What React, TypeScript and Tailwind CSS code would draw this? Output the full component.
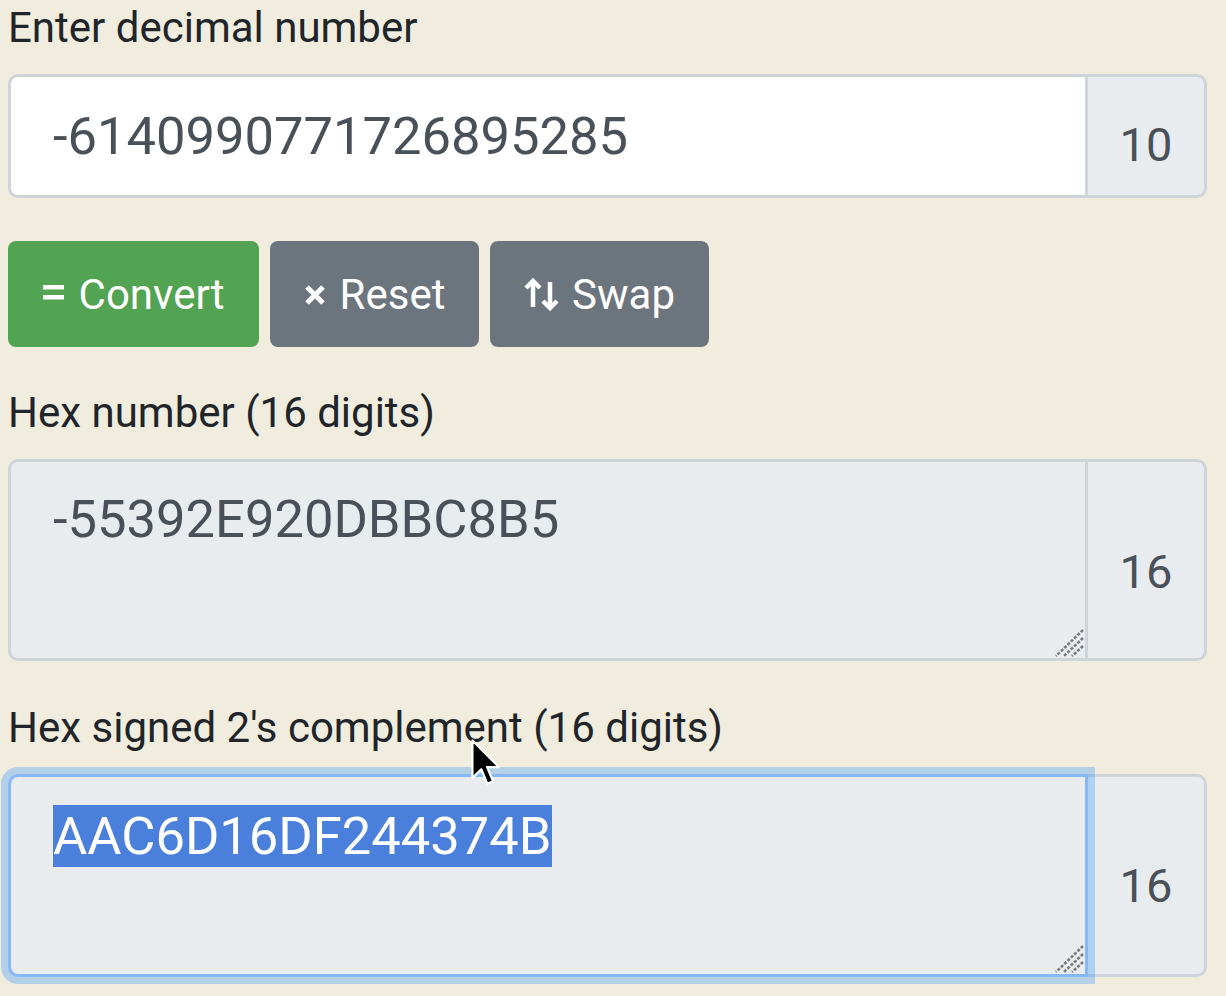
import React from "react";

const Grip = () => (
  <svg
    className="absolute right-[1px] bottom-[1px]"
    width="30"
    height="28"
    viewBox="0 0 30 28"
  >
    <g stroke="#7a7a7a" strokeWidth="2.6" strokeDasharray="3 1.6">
      <line x1="29" y1="1" x2="2" y2="27" />
      <line x1="29" y1="9" x2="10" y2="27" />
      <line x1="29" y1="17" x2="18" y2="27" />
    </g>
  </svg>
);

const Label = ({ children, mt }: { children: React.ReactNode; mt: string }) => (
  <div className={`${mt} mb-[21px] h-[50px] text-[42px] leading-[50px] text-[#212529] whitespace-nowrap`}>
    {children}
  </div>
);

export default function App() {
  return (
    <div className="relative min-h-screen w-full overflow-hidden bg-[#f0eddf] font-['Roboto','Liberation_Sans',sans-serif]">
      <div className="w-[1207px] pl-[8px]">
        <Label mt="mt-[3px]">Enter decimal number</Label>

        <div className="flex h-[124px] w-[1199px]">
          <div className="flex flex-1 items-center rounded-l-[10px] border-[3px] border-[#ced4da] bg-white pl-[42px] text-[52.5px] leading-[62px] text-[#495057]">
            -6140990771726895285
          </div>
          <div className="flex w-[119px] items-center justify-center rounded-r-[10px] border-[3px] border-l-0 border-[#ced4da] bg-[#e9ecef] pt-[18px] text-[47px] leading-[62px] text-[#495057]">
            10
          </div>
        </div>

        <div className="mt-[43px] flex h-[106px] gap-[11px]">
          <button className="flex w-[251px] items-center justify-center gap-[15px] rounded-[8px] bg-[#52a352] text-[42px] text-white">
            <svg width="21" height="15" viewBox="0 0 21 15" className="mb-[4px]">
              <rect x="0" y="0" width="21" height="4.5" fill="white" />
              <rect x="0" y="10" width="21" height="4.5" fill="white" />
            </svg>
            <span>Convert</span>
          </button>
          <button className="flex w-[209px] items-center justify-center gap-[14px] rounded-[8px] bg-[#6c757d] text-[42px] text-white">
            <svg width="22" height="22" viewBox="0 0 22 22" className="mt-[2px]">
              <path d="M3 3 L19 19 M19 3 L3 19" stroke="white" strokeWidth="5" />
            </svg>
            <span>Reset</span>
          </button>
          <button className="flex w-[219px] items-center justify-center gap-[12px] rounded-[8px] bg-[#6c757d] text-[42px] text-white">
            <svg width="36" height="35" viewBox="0 0 36 35">
              <g stroke="white" strokeWidth="4.5" fill="none">
                <line x1="9" y1="4" x2="9" y2="30" />
                <polyline points="2,11 9,4 16,11" />
                <line x1="26" y1="5" x2="26" y2="31" />
                <polyline points="19,24 26,31 33,24" />
              </g>
            </svg>
            <span>Swap</span>
          </button>
        </div>

        <Label mt="mt-[41px]">Hex number (16 digits)</Label>

        <div className="flex h-[202px] w-[1199px]">
          <div className="relative flex-1 rounded-l-[10px] border-[3px] border-[#ced4da] bg-[#e9ecef] pl-[42px] pt-[26px] text-[52.5px] leading-[62px] text-[#495057]">
            -55392E920DBBC8B5
            <Grip />
          </div>
          <div className="flex w-[119px] items-center justify-center rounded-r-[10px] border-[3px] border-l-0 border-[#ced4da] bg-[#e9ecef] pt-[24px] text-[47px] leading-[62px] text-[#495057]">
            16
          </div>
        </div>

        <Label mt="mt-[42px]">Hex signed 2's complement (16 digits)</Label>

        <div className="flex h-[203px] w-[1199px]">
          <div className="relative z-10 flex-1 rounded-l-[10px] border-[3px] border-[#86b7f8] bg-[#e9ecef] pl-[42px] pt-[28px] text-[52.5px] leading-[62px] text-[#495057] shadow-[0_0_0_7px_rgba(0,123,255,0.25)]">
            <span className="bg-[#4a80dc] text-white">AAC6D16DF244374B</span>
            <Grip />
          </div>
          <div className="flex w-[119px] items-center justify-center rounded-r-[10px] border-[3px] border-l-0 border-[#ced4da] bg-[#e9ecef] pt-[21px] text-[47px] leading-[62px] text-[#495057]">
            16
          </div>
        </div>
      </div>

      <svg
        className="absolute left-[471px] top-[739px] z-20"
        width="30"
        height="48"
        viewBox="0 0 12.5 20"
      >
        <path
          d="M0.6 0.6 L0.6 16.2 L4.3 12.6 L6.8 18.6 L9.2 17.6 L6.7 11.7 L11.6 11.7 Z"
          fill="black"
          stroke="white"
          strokeWidth="0.9"
          strokeLinejoin="round"
        />
      </svg>
    </div>
  );
}
